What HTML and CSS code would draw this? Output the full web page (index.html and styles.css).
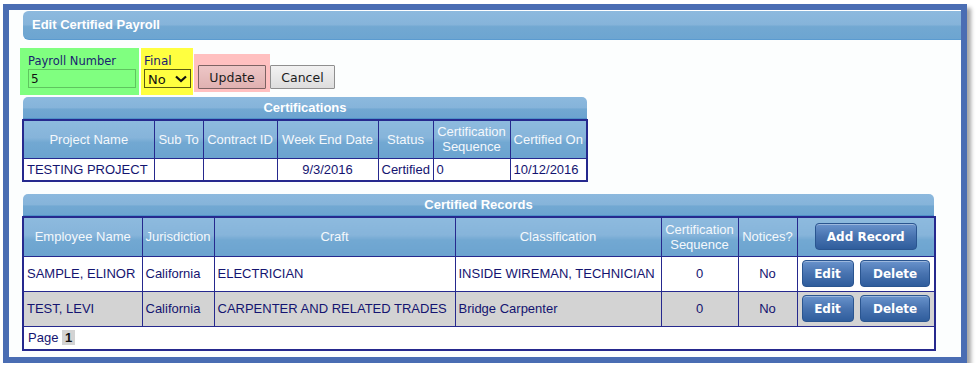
FILE: index.html
```html
<!DOCTYPE html>
<html lang="en">
<head>
    <meta charset="UTF-8">
    <meta name="viewport" content="width=device-width, initial-scale=1.0">
    <title>Edit Certified Payroll</title>
    <link rel="stylesheet" href="styles.css">
</head>
<body>
    <div class="frame">
        <div class="page-title">Edit Certified Payroll</div>

        <div class="form-row">
            <div class="field field-green">
                <label for="payroll-number">Payroll Number</label>
                <input id="payroll-number" class="text-input" type="text" value="5">
            </div>
            <div class="field field-yellow">
                <label for="final">Final</label>
                <span class="select-wrap">
                    <select id="final" class="select">
                        <option>No</option>
                        <option>Yes</option>
                    </select>
                    <svg class="chevron" width="12" height="8" viewBox="0 0 12 8"><path d="M1 1.5 L6 6 L11 1.5" fill="none" stroke="#111" stroke-width="2.2"/></svg>
                </span>
            </div>
            <div class="field-pink">
                <button class="btn btn-update" type="submit">Update</button>
            </div>
            <button class="btn btn-cancel" type="button">Cancel</button>
        </div>

        <div class="panel panel-cert">
            <div class="panel-title">Certifications</div>
            <table class="grid">
                <colgroup>
                    <col class="w131"><col class="w49"><col class="w74"><col class="w101"><col class="w55"><col class="w77"><col class="w77">
                </colgroup>
                <thead>
                    <tr class="head-row-sm">
                        <th>Project Name</th>
                        <th>Sub To</th>
                        <th>Contract ID</th>
                        <th>Week End Date</th>
                        <th>Status</th>
                        <th class="two-line">Certification Sequence</th>
                        <th>Certified On</th>
                    </tr>
                </thead>
                <tbody>
                    <tr class="cert-row">
                        <td>TESTING PROJECT</td>
                        <td></td>
                        <td></td>
                        <td class="center">9/3/2016</td>
                        <td>Certified</td>
                        <td>0</td>
                        <td>10/12/2016</td>
                    </tr>
                </tbody>
            </table>
        </div>

        <div class="panel panel-records">
            <div class="panel-title">Certified Records</div>
            <table class="grid">
                <colgroup>
                    <col class="w119"><col class="w72"><col class="w241"><col class="w206"><col class="w77"><col class="w59"><col class="w138">
                </colgroup>
                <thead>
                    <tr class="head-row">
                        <th>Employee Name</th>
                        <th>Jurisdiction</th>
                        <th>Craft</th>
                        <th>Classification</th>
                        <th class="two-line">Certification Sequence</th>
                        <th>Notices?</th>
                        <th><button class="btn-blue btn-add" type="button">Add Record</button></th>
                    </tr>
                </thead>
                <tbody>
                    <tr class="rec-row">
                        <td>SAMPLE, ELINOR</td>
                        <td>California</td>
                        <td>ELECTRICIAN</td>
                        <td>INSIDE WIREMAN, TECHNICIAN</td>
                        <td class="center">0</td>
                        <td class="center">No</td>
                        <td class="actions">
                            <button class="btn-blue btn-edit" type="button">Edit</button>
                            <button class="btn-blue btn-delete" type="button">Delete</button>
                        </td>
                    </tr>
                    <tr class="rec-row alt">
                        <td>TEST, LEVI</td>
                        <td>California</td>
                        <td>CARPENTER AND RELATED TRADES</td>
                        <td>Bridge Carpenter</td>
                        <td class="center">0</td>
                        <td class="center">No</td>
                        <td class="actions">
                            <button class="btn-blue btn-edit" type="button">Edit</button>
                            <button class="btn-blue btn-delete" type="button">Delete</button>
                        </td>
                    </tr>
                    <tr class="pager-row">
                        <td colspan="7">Page <span class="page-num">1</span></td>
                    </tr>
                </tbody>
            </table>
        </div>
    </div>
</body>
</html>
```

FILE: styles.css
```css
body {
    margin: 0;
    padding: 0;
    background-color: #ffffff;
    font-family: "Liberation Sans", Arial, sans-serif;
}
.frame {
    margin: 4px 0 0 3px;
    width: 952px;
    height: 347px;
    border: 6px solid #4a6db3;
    background-color: #fcfefe;
    box-shadow: 4px 4px 4px rgba(0, 0, 0, 0.35);
}
.page-title {
    margin-left: 14px;
    height: 30px;
    padding-left: 9px;
    box-sizing: border-box;
    border-radius: 6px 0 0 6px;
    border-top: 1px solid #ffffff;
    border-bottom: 1px solid #5b9bd0;
    background: linear-gradient(to bottom, #8cb9de 0%, #86b4da 48%, #72a8d2 56%, #6da5d1 100%);
    color: #ffffff;
    font-weight: bold;
    font-size: 13px;
    line-height: 28px;
}
.form-row {
    display: flex;
    align-items: flex-start;
    margin: 8px 0 0 11px;
}
.field {
    display: flex;
    flex-direction: column;
    height: 47px;
    box-sizing: border-box;
    padding-top: 6px;
}
.field label {
    font-family: "DejaVu Sans", Verdana, sans-serif;
    font-size: 11.5px;
    line-height: 15px;
    color: #1a2370;
}
.field-green {
    width: 119px;
    padding-left: 8px;
    background-color: #80ff80;
}
.field-yellow {
    width: 52px;
    margin-left: 2px;
    padding-left: 3px;
    background-color: #ffff40;
}
.field-yellow label {
    font-size: 12px;
}
.text-input {
    width: 108px;
    height: 19px;
    box-sizing: border-box;
    margin: 0;
    padding: 0 2px;
    border: 1px solid #5fc55f;
    background-color: #80ff80;
    font-family: "DejaVu Sans", Verdana, sans-serif;
    font-size: 12px;
    color: #111;
}
.select-wrap {
    position: relative;
    display: block;
    width: 47px;
    height: 19px;
}
.select {
    appearance: none;
    -webkit-appearance: none;
    width: 47px;
    height: 19px;
    box-sizing: border-box;
    margin: 0;
    padding: 1px 0 0 3px;
    border: 1px solid #5a5a10;
    border-radius: 0;
    background-color: #ffff40;
    font-family: "DejaVu Sans", Verdana, sans-serif;
    font-size: 13px;
    color: #111;
}
.chevron {
    position: absolute;
    right: 4px;
    top: 6px;
    pointer-events: none;
}
.field-pink {
    width: 76px;
    height: 38px;
    box-sizing: border-box;
    margin: 6px 0 0 1px;
    padding: 11px 0 0 4px;
    background-color: #ffc0c0;
}
.btn {
    height: 24px;
    margin: 0;
    padding: 0;
    border: 1px solid #8f8f8f;
    border-radius: 1px;
    font-family: "DejaVu Sans", Verdana, sans-serif;
    font-size: 12.5px;
    color: #1c1c1c;
}
.btn-update {
    width: 68px;
    border-color: #7d6363;
    background: linear-gradient(to bottom, #edc6c6, #e0b1b1);
}
.btn-cancel {
    width: 65px;
    margin-top: 17px;
    background: linear-gradient(to bottom, #f2f2f2, #dddddd);
}
.panel {
    margin-left: 13px;
}
.panel-cert {
    width: 565px;
    margin-top: 2px;
}
.panel-records {
    width: 912px;
    margin-top: 12px;
}
.panel-title {
    height: 21px;
    margin-left: 1px;
    border-radius: 5px 5px 0 0;
    border-bottom: 1px solid #4f90c8;
    background: linear-gradient(to bottom, #8cb9de 0%, #86b4da 50%, #72a8d2 58%, #6ca4d0 100%);
    color: #ffffff;
    text-align: center;
    font-weight: bold;
    font-size: 13px;
    line-height: 21px;
}
.grid {
    width: 100%;
    table-layout: fixed;
    border-collapse: collapse;
    border: 2px solid #26298e;
    font-size: 13px;
    color: #141470;
}
.grid th,
.grid td {
    border: 1px solid #26298e;
    padding: 0 3px;
    overflow: hidden;
    white-space: nowrap;
}
.grid th {
    font-weight: normal;
    color: #f4f8fc;
    background: linear-gradient(to bottom, #8dbade 0%, #86b4da 45%, #72a8d2 58%, #6ba3cf 100%);
    text-align: center;
    line-height: 15px;
}
.grid th.two-line {
    white-space: normal;
    padding: 0;
}
.grid td {
    background-color: #ffffff;
}
.grid .alt td {
    background-color: #d3d3d3;
}
.grid td.center {
    text-align: center;
}
.head-row-sm {
    height: 38px;
}
.cert-row {
    height: 23px;
}
.head-row {
    height: 39px;
}
.rec-row {
    height: 35px;
}
.pager-row {
    height: 24px;
}
.pager-row td {
    border-top: 1px solid #26298e;
    padding-left: 4px;
}
.page-num {
    display: inline-block;
    padding: 0 3px;
    background-color: #d3d3d3;
    font-weight: bold;
    color: #111;
    line-height: 15px;
}
.grid td.actions {
    padding: 0 0 0 4px;
}
.btn-blue {
    height: 27px;
    margin: 0;
    padding: 0;
    border: 1px solid #2a5590;
    border-radius: 4px;
    background: linear-gradient(to bottom, #6993cc 0%, #4873b0 50%, #2f5d9c 100%);
    box-shadow: inset 0 1px 0 rgba(255, 255, 255, 0.35);
    color: #ffffff;
    font-family: "DejaVu Sans", Verdana, sans-serif;
    font-weight: bold;
    font-size: 12px;
    cursor: pointer;
}
.btn-add {
    width: 102px;
    height: 27px;
}
.btn-edit {
    width: 52px;
}
.btn-delete {
    width: 70px;
    margin-left: 3px;
}
.w49 { width: 49px; }
.w55 { width: 55px; }
.w59 { width: 59px; }
.w72 { width: 72px; }
.w74 { width: 74px; }
.w77 { width: 77px; }
.w101 { width: 101px; }
.w119 { width: 119px; }
.w131 { width: 131px; }
.w138 { width: 138px; }
.w206 { width: 206px; }
.w241 { width: 241px; }
```
